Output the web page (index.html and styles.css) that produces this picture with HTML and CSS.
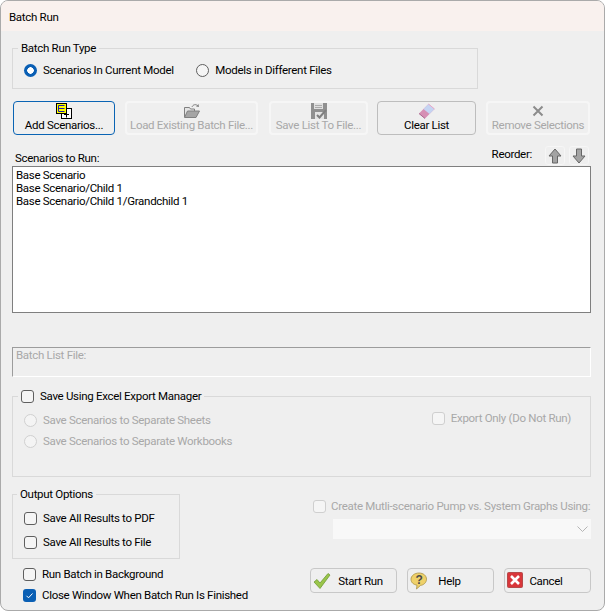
FILE: index.html
```html
<!DOCTYPE html>
<html lang="en">
<head>
<meta charset="utf-8">
<title>Batch Run</title>
<link rel="stylesheet" href="styles.css">
</head>
<body>
<div class="window">
  <header class="titlebar">Batch Run</header>
  <main class="content">
    <fieldset class="group type-group">
      <legend class="legend">Batch Run Type</legend>
      <label class="opt type-first"><span class="radio on"></span><span>Scenarios In Current Model</span></label>
      <label class="opt"><span class="radio"></span><span>Models in Different Files</span></label>
    </fieldset>

    <div class="toolbar">
      <button class="tool focus w-add">
        <svg class="ico" width="18" height="16" viewBox="0 0 18 16"><rect x="6.500" y="5.500" width="10" height="10" fill="#fff" stroke="#000"/><path d="M9 11.500h5M11.500 9.500v5" stroke="#000"/><rect x="1.500" y="0.500" width="10" height="10" fill="#ff0" stroke="#000"/><path d="M3.500 2.500h6M3.500 2.500v6h6M3.500 5.500h6" fill="none" stroke="#1a1ab0"/></svg>
        <span>Add Scenarios...</span>
      </button>
      <button class="tool off w-load">
        <svg class="ico" width="18" height="16" viewBox="0 0 18 16"><path d="M1.500 14V4.500h5l1 1.500h4v2" fill="#e4e4e4" stroke="#808080"/><path d="M1.500 14.500l3-6.500h12l-3.500 6.500z" fill="#a5a5a5" stroke="#808080"/><path d="M9 4c1-2.500 3.500-3 5.500-1.500" fill="none" stroke="#808080"/><path d="M13 3.500l3 .5-.5-3z" fill="#808080"/></svg>
        <span>Load Existing Batch File...</span>
      </button>
      <button class="tool off w-save">
        <svg class="ico" width="16" height="16" viewBox="0 0 16 16"><path d="M0 0h16v16H0z" fill="#909090"/><rect x="3" y="0" width="9" height="6" fill="#e0e0e0"/><path d="M4 2.500h7M4 4.500h7" stroke="#aaa"/><rect x="4" y="9" width="9" height="7" fill="#e4e4e4"/><path d="M6 12l2.500 2.500L15 7" fill="none" stroke="#808080" stroke-width="2"/></svg>
        <span>Save List To File...</span>
      </button>
      <button class="tool plain w-clear">
        <svg class="ico" width="16" height="16" viewBox="0 0 16 16"><path d="M0 10.500L9.500 1 15.500 6 6 15.500z" fill="#d68fb4"/><path d="M4.500 6L9.500 1 15.500 6 10.500 11z" fill="#c5d4f2"/><path d="M9.500 1L15.500 6" stroke="#e9a8c8"/><path d="M0 10.500l6 5" stroke="#a8648c"/></svg>
        <span>Clear List</span>
      </button>
      <button class="tool off w-remove">
        <svg class="ico" width="16" height="16" viewBox="0 0 16 16"><path d="M3.500 3.500l9 9M12.500 3.500l-9 9" stroke="#8c8c8c" stroke-width="2"/></svg>
        <span>Remove Selections</span>
      </button>
    </div>

    <div class="list-head">
      <span class="list-label">Scenarios to Run:</span>
      <div class="reorder">
        <span class="reorder-label">Reorder:</span>
        <button class="arrow"><svg width="14" height="16" viewBox="0 0 14 16"><path d="M7 1l6 7H9.500v7h-5V8H1z" fill="#a4a4a4" stroke="#666"/></svg></button>
        <button class="arrow"><svg width="14" height="16" viewBox="0 0 14 16"><path d="M7 15l6-7H9.500V1h-5v7H1z" fill="#a4a4a4" stroke="#666"/></svg></button>
      </div>
    </div>
    <div class="listbox">
      <div>Base Scenario</div>
      <div>Base Scenario/Child 1</div>
      <div>Base Scenario/Child 1/Grandchild 1</div>
    </div>

    <div class="filebox">Batch List File:</div>

    <fieldset class="group excel-group">
      <legend class="legend legend-check"><span class="check"></span><span>Save Using Excel Export Manager</span></legend>
      <div class="excel-body">
        <div class="excel-radios">
          <label class="opt dim"><span class="radio dis"></span><span>Save Scenarios to Separate Sheets</span></label>
          <label class="opt dim"><span class="radio dis"></span><span>Save Scenarios to Separate Workbooks</span></label>
        </div>
        <label class="opt dim export"><span class="check dis"></span><span>Export Only (Do Not Run)</span></label>
      </div>
    </fieldset>

    <div class="bottom">
      <div class="bottom-left">
        <fieldset class="group output-group">
          <legend class="legend">Output Options</legend>
          <label class="opt"><span class="check"></span><span>Save All Results to PDF</span></label>
          <label class="opt"><span class="check"></span><span>Save All Results to File</span></label>
        </fieldset>
        <div class="after-output">
          <label class="opt"><span class="check"></span><span>Run Batch in Background</span></label>
          <label class="opt tight"><span class="check on"><svg width="13" height="13" viewBox="0 0 13 13"><path d="M3.500 6.800l2 2 4-4.300" fill="none" stroke="#fff"/></svg></span><span>Close Window When Batch Run Is Finished</span></label>
        </div>
      </div>
      <div class="bottom-right">
        <label class="opt dim create"><span class="check dis"></span><span>Create Mutli-scenario Pump vs. System Graphs Using:</span></label>
        <div class="select"><svg width="11" height="6" viewBox="0 0 11 6"><path d="M.5.500l5 5 5-5" fill="none" stroke="#b5b5b5"/></svg></div>
        <div class="actions">
          <button class="action">
            <svg class="action-ico" width="18" height="18" viewBox="0 0 18 18"><path d="M1 10l3-2.500 3 3.500L15 1.500l2 1.500L7 16.500z" fill="#9ac54a" stroke="#6f9a33" stroke-width=".8"/></svg>
            <span class="action-text start-text">Start Run</span>
          </button>
          <button class="action">
            <svg class="action-ico" width="18" height="18" viewBox="0 0 18 18"><path d="M9 1c4.500 0 7.500 2.800 7.500 6.200s-3 6-6 6.200L6.500 17l.5-3.800C3.500 12.500 1 10.500 1 7.200S4.500 1 9 1z" fill="#efd16a" stroke="#a89245" stroke-width=".8"/><text x="9" y="12" font-family="Liberation Sans" font-size="12" font-weight="700" text-anchor="middle" fill="#4b4b4b">?</text></svg>
            <span class="action-text help-text">Help</span>
          </button>
          <button class="action">
            <svg class="action-ico" width="16" height="16" viewBox="0 0 16 16"><rect x=".5" y=".5" width="15" height="15" rx="1" fill="#d9363a" stroke="#b54a4a"/><path d="M4 4l8 8M12 4l-8 8" stroke="#fff" stroke-width="2.600"/></svg>
            <span class="action-text cancel-text">Cancel</span>
          </button>
        </div>
      </div>
    </div>
  </main>
</div>
</body>
</html>
```
FILE: styles.css
```css
* { box-sizing: border-box; }
html, body { margin: 0; padding: 0; background: #fff; }
body { width: 605px; height: 611px; overflow: hidden; font: 11.5px/13px Roboto, "Liberation Sans", Arial, sans-serif; letter-spacing: -0.3px; color: #000; }
button, label { font: inherit; letter-spacing: inherit; }

.window { width: 605px; height: 611px; display: flex; flex-direction: column; border: 1px solid #aaa; border-radius: 8px; overflow: hidden; background: #efefef; }
.titlebar { height: 30px; flex: none; padding: 9px 0 0 8px; background: #f9f1ee; line-height: 14px; }
.content { flex: 1; display: flex; flex-direction: column; padding: 0 13px 0 11px; }

.group { margin: 0; min-width: 0; border: 1px solid #d9d9d9; }
.legend { padding: 0 3px; margin-left: -6px; line-height: 13px; }

.opt { display: flex; align-items: center; gap: 6px; white-space: nowrap; }
.dim { color: #a8a8a8; }

.radio { width: 13px; height: 13px; flex: none; border-radius: 50%; border: 1px solid #5f5f5f; background: #f5f5f5; }
.radio.on { border: 0; background: radial-gradient(circle, #fff 0 3px, #0a5fb4 3.500px); }
.radio.dis { border-color: #d0d0d0; background: #f4f4f4; }

.check { width: 13px; height: 13px; flex: none; border: 1px solid #5f5f5f; border-radius: 3px; background: #f5f5f5; display: block; }
.check.on { border: 0; background: #0a5fb4; }
.check.on svg { display: block; }
.check.dis { border-color: #cfcfcf; }

.type-group { height: 47px; width: 466px; flex: none; margin-top: 11px; padding: 0 0 0 11px; }
.type-group .opt { display: inline-flex; margin-top: 9px; vertical-align: top; }
.type-first { margin-right: 20px; }

.toolbar { display: flex; flex: none; margin: 12px 0 0 1px; height: 34px; }
.tool { display: flex; flex-direction: column; align-items: center; padding: 1px 0 0; background: #efefef; border: 1px solid #d0d0d0; border-radius: 4px; line-height: 13px; color: #000; white-space: nowrap; }
.tool .ico { display: block; height: 16px; flex: none; }
.focus { border: 1px solid #0a64b4; }
.off { color: #a8a8a8; border: 2px solid #f6f6f6; padding-top: 0; }
.plain { border: 1px solid #bdbdbd; }
.w-add { width: 102px; margin-right: 10px; }
.w-load { width: 133px; margin-right: 11px; }
.w-save { width: 99px; margin-right: 9px; }
.w-clear { width: 99px; margin-right: 10px; }
.w-remove { width: 104px; }

.list-head { display: flex; flex: none; justify-content: space-between; margin: 11px 0 0 3px; height: 20px; width: 574px; }
.list-label { align-self: flex-end; padding-bottom: 1px; }
.reorder { display: flex; gap: 4px; height: 19px; }
.reorder-label { margin-right: 9px; margin-top: 2px; }
.arrow { width: 20px; height: 19px; padding: 1px 0 0; border: 1px solid #f6f6f6; border-radius: 3px; background: #efefef; display: flex; justify-content: center; }

.listbox { height: 147px; width: 579px; flex: none; padding: 2px 3px; background: #fff; border: 1px solid #7f7f7f; }

.filebox { height: 30px; width: 579px; flex: none; margin-top: 34px; padding: 1px 3px; color: #a8a8a8; border: 1px solid; border-color: #9c9c9c #fff #fff #9c9c9c; }

.excel-group { width: 579px; height: 87px; flex: none; margin-top: 13px; padding: 0 0 0 11px; }
.legend-check { display: flex; align-items: center; gap: 6px; }
.excel-body { display: flex; justify-content: space-between; padding: 11px 19px 0 0; }
.excel-radios { display: flex; flex-direction: column; gap: 8px; }
.export { align-self: flex-start; margin-top: -2px; }

.bottom { display: flex; flex: 1; min-height: 0; width: 579px; margin-top: 11px; }
.bottom-left { width: 298px; flex: none; display: flex; flex-direction: column; }
.output-group { width: 168px; height: 71px; flex: none; padding: 0 0 0 11px; display: flex; flex-direction: column; gap: 11px; }
.output-group .legend { margin-left: -7px; }
.output-group .opt:first-of-type { margin-top: 11px; }
.after-output { display: flex; flex-direction: column; gap: 8px; margin: 9px 0 0 11px; }
.tight { gap: 6px; }

.bottom-right { flex: 1; min-width: 0; display: flex; flex-direction: column; }
.create { margin: 12px 0 0 3px; gap: 5px; }
.select { margin: 6px 0 0 23px; height: 20px; flex: none; background: #f8f8f8; display: flex; justify-content: flex-end; align-items: center; padding-right: 3px; }
.actions { display: flex; justify-content: flex-end; gap: 10px; margin-top: 29px; }
.action { position: relative; width: 87px; height: 25px; flex: none; padding: 0; background: #efefef; border: 1px solid #c8c8c8; border-radius: 4px; color: #000; display: block; text-align: center; line-height: 24px; }
.action-ico { position: absolute; left: 2px; top: 3px; }
.action-text { display: block; }
.start-text { padding-left: 14px; }
.help-text { padding-right: 2px; }
.cancel-text { padding-right: 3px; }
```
